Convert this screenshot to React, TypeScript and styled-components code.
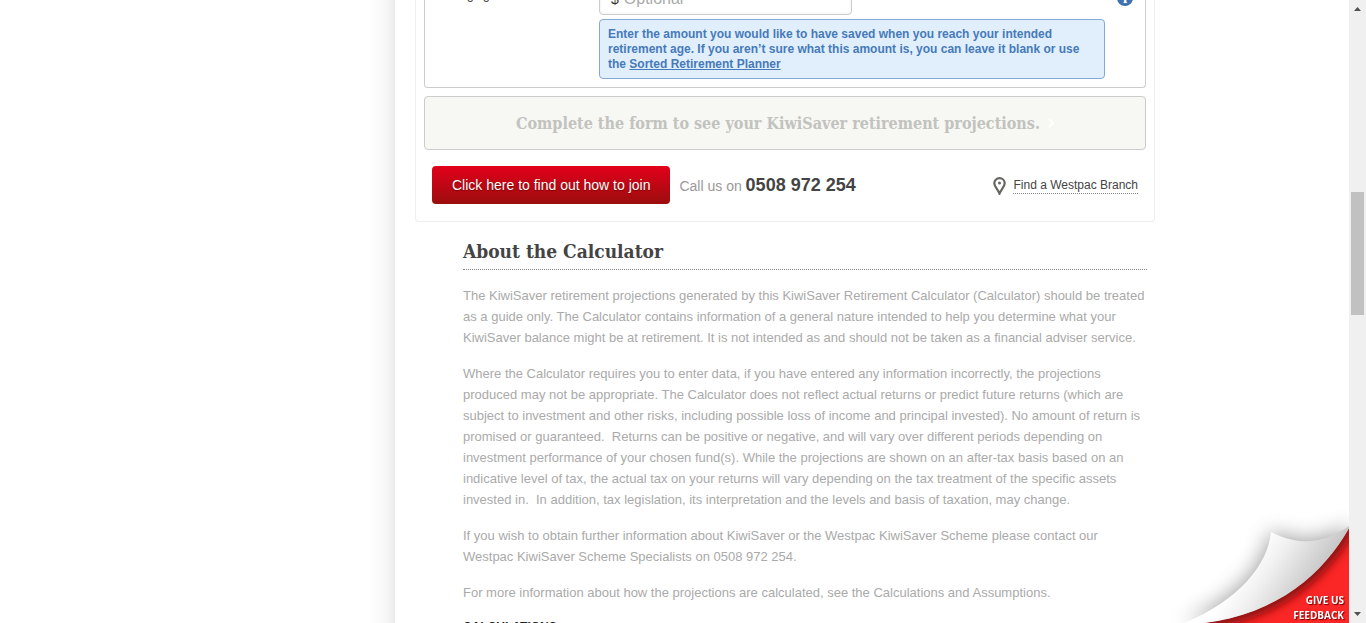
import React from 'react';
import styled, { createGlobalStyle } from 'styled-components';

const sans = `"Liberation Sans", Arial, Helvetica, sans-serif`;
const slab = `"DejaVu Serif Condensed", "DejaVu Serif", serif`;

const GlobalStyle = createGlobalStyle`
  *, *::before, *::after { box-sizing: border-box; }
  body { margin: 0; background: #fff; font-family: ${sans}; }
`;

const Viewport = styled.div`
  display: grid;
  grid-template-columns: minmax(0, 395fr) minmax(0, 954fr) 17px;
  grid-template-rows: minmax(0, 1fr);
  height: 100vh;
  overflow: hidden;
`;

const Gutter = styled.div`
  background: linear-gradient(to left, #ebebeb, #f6f6f6 8px, #fbfbfb 16px, #fff 28px);
`;

const Page = styled.main`
  min-width: 0;
  margin-top: -32px;
  padding-left: 20px;
`;

const Card = styled.section`
  max-width: 740px;
  padding: 0 8px 17px;
  border: 1px solid #eee;
  border-top: 0;
  border-radius: 0 0 4px 4px;
`;

const FormPanel = styled.form`
  display: grid;
  grid-template-columns: 162px minmax(0, 506px) 1fr;
  padding: 11px 12px 8px;
  border: 1px solid #ccc;
  border-top: 0;
  border-radius: 0 0 4px 4px;
`;

const FieldLabel = styled.label`
  padding-top: 9px;
  font-size: 12px;
  line-height: 15px;
  color: #333;
`;

const MoneyBox = styled.div`
  display: flex;
  align-items: center;
  gap: 5px;
  width: 253px;
  height: 36px;
  padding: 3px 11px 0;
  border: 1px solid #ccc;
  border-radius: 4px;
  box-shadow: inset 0 0 3px #e8e8e8;
  font-size: 14px;
  color: #333;
`;

const MoneyInput = styled.input`
  flex: 1;
  min-width: 0;
  padding: 0;
  border: 0;
  outline: 0;
  background: transparent;
  font: 16px ${sans};
  color: #333;
  &::placeholder { color: #aaa; }
`;

const Hint = styled.p`
  margin: 4px 0 0;
  padding: 7px 8px 6px;
  border: 1px solid #85a9d6;
  border-radius: 4px;
  background: #e1effd;
  font-size: 12px;
  font-weight: bold;
  line-height: 15px;
  color: #467ab8;
`;

const HintLink = styled.a`
  color: inherit;
`;

const InfoButton = styled.button`
  justify-self: end;
  align-self: start;
  width: 16px;
  height: 16px;
  margin-top: 11px;
  padding: 0;
  border: 0;
  border-radius: 50%;
  background: #3f72b3;
  font: bold 15px/16px "Liberation Serif", serif;
  color: #fff;
`;

const ProjectionButton = styled.button`
  display: flex;
  align-items: center;
  justify-content: center;
  gap: 8px;
  width: 100%;
  height: 54px;
  margin-top: 8px;
  padding: 0;
  border: 1px solid #ccc;
  border-radius: 4px;
  background: #f7f7f3;
  font: bold 16px ${slab};
  color: #c2c2be;
`;

const Actions = styled.div`
  display: flex;
  align-items: center;
  margin-top: 16px;
  padding: 0 8px;
`;

const JoinButton = styled.button`
  height: 38px;
  padding: 0 20px;
  border: 0;
  border-radius: 4px;
  background: linear-gradient(#e3001b, #9b0d0d);
  font: 14px ${sans};
  color: #fff;
  text-shadow: 0 1px 1px #7a0000;
`;

const CallUs = styled.p`
  margin: 0 auto 0 9px;
  font-size: 14px;
  color: #999;
`;

const Phone = styled.strong`
  font-size: 18px;
  color: #444;
`;

const BranchLink = styled.a`
  display: flex;
  align-items: center;
  gap: 7px;
  padding-top: 2px;
  font-size: 12px;
  line-height: 15px;
  color: #444;
  text-decoration: none;
`;

const BranchText = styled.span`
  border-bottom: 1px dotted #888;
`;

const About = styled.article`
  max-width: 732px;
  padding: 17px 0 0 48px;
`;

const AboutTitle = styled.h2`
  margin: 0;
  padding-bottom: 6px;
  border-bottom: 1px dotted #888;
  font: bold 19px/24px ${slab};
  color: #444;
`;

const Copy = styled.p`
  margin: 15px 0 0;
  font-size: 13px;
  line-height: 21px;
  color: #aaa;
`;

const SubTitle = styled.h3`
  margin: 15px 0 0;
  font-size: 12px;
  line-height: 18px;
  color: #222;
`;

const ScrollTrack = styled.div`
  display: grid;
  grid-template-rows: 17px 175fr 123fr 291fr 17px;
  background: #f0f0f0;
`;

const ScrollThumb = styled.div`
  grid-row: 3;
  margin: 0 2px;
  background: #c1c1c1;
`;

const ScrollArrow = styled.svg<{ $row: number }>`
  grid-row: ${(p) => p.$row};
  width: 17px;
  height: 17px;
  fill: #505050;
`;

const Feedback = styled.a`
  position: fixed;
  right: 17px;
  bottom: 0;
  display: block;
  width: 183px;
  height: 120px;
  text-decoration: none;
`;

const Curl = styled.svg`
  display: block;
`;

const FeedbackText = styled.span`
  position: absolute;
  right: 5px;
  bottom: 0;
  font: bold 10px/15px "Open Sans", sans-serif;
  text-align: right;
  color: #fff;
  text-shadow: 1px 1px 1px #700;
`;

export default function App() {
  return (
    <Viewport>
      <GlobalStyle />
      <Gutter />
      <Page>
        <Card>
          <FormPanel onSubmit={(e) => e.preventDefault()}>
            <FieldLabel htmlFor="goal">Savings goal</FieldLabel>
            <div>
              <MoneyBox>
                <span>$</span>
                <MoneyInput id="goal" placeholder="Optional" />
              </MoneyBox>
              <Hint>
                Enter the amount you would like to have saved when you reach your intended
                retirement age. If you aren’t sure what this amount is, you can leave it blank or
                use the <HintLink href="#planner">Sorted Retirement Planner</HintLink>
              </Hint>
            </div>
            <InfoButton type="button">i</InfoButton>
          </FormPanel>
          <ProjectionButton type="button">
            Complete the form to see your KiwiSaver retirement projections.
            <svg width="6" height="10" viewBox="0 0 6 10" fill="none" stroke="#fff" strokeWidth="2">
              <path d="M1 1l4 4-4 4" />
            </svg>
          </ProjectionButton>
          <Actions>
            <JoinButton type="button">Click here to find out how to join</JoinButton>
            <CallUs>
              Call us on <Phone>0508 972 254</Phone>
            </CallUs>
            <BranchLink href="#branch">
              <svg width="13" height="18" viewBox="0 0 13 18" fill="none">
                <path
                  d="M6.5 1.2C3.5 1.2 1.3 3.4 1.3 6.3c0 3.4 3.4 5.7 5.2 10.3 1.8-4.6 5.2-6.9 5.2-10.3 0-2.9-2.2-5.1-5.2-5.1z"
                  stroke="#666661"
                  strokeWidth="2.2"
                />
                <circle cx="6.5" cy="6" r="1.5" fill="#666661" />
              </svg>
              <BranchText>Find a Westpac Branch</BranchText>
            </BranchLink>
          </Actions>
        </Card>

        <About>
          <AboutTitle>About the Calculator</AboutTitle>
          <Copy>
            The KiwiSaver retirement projections generated by this KiwiSaver Retirement Calculator
            (Calculator) should be treated as a guide only. The Calculator contains information of a
            general nature intended to help you determine what your KiwiSaver balance might be at
            retirement. It is not intended as and should not be taken as a financial adviser
            service.
          </Copy>
          <Copy>
            Where the Calculator requires you to enter data, if you have entered any information
            incorrectly, the projections produced may not be appropriate. The Calculator does not
            reflect actual returns or predict future returns (which are subject to investment and
            other risks, including possible loss of income and principal invested). No amount of
            return is promised or guaranteed.&nbsp; Returns can be positive or negative, and will
            vary over different periods depending on investment performance of your chosen fund(s).
            While the projections are shown on an after-tax basis based on an indicative level of
            tax, the actual tax on your returns will vary depending on the tax treatment of the
            specific assets invested in.&nbsp; In addition, tax legislation, its interpretation and
            the levels and basis of taxation, may change.
          </Copy>
          <Copy>
            If you wish to obtain further information about KiwiSaver or the Westpac KiwiSaver
            Scheme please contact our Westpac KiwiSaver Scheme Specialists on 0508 972 254.
          </Copy>
          <Copy>
            For more information about how the projections are calculated, see the Calculations and
            Assumptions.
          </Copy>
          <SubTitle>CALCULATIONS</SubTitle>
        </About>
      </Page>

      <ScrollTrack>
        <ScrollArrow $row={1} viewBox="0 0 17 17">
          <path d="M5 11h7L8.500 7z" />
        </ScrollArrow>
        <ScrollThumb />
        <ScrollArrow $row={5} viewBox="0 0 17 17">
          <path d="M5 6h7l-3.500 4z" />
        </ScrollArrow>
      </ScrollTrack>

      <Feedback href="#feedback">
        <Curl width="183" height="120" viewBox="0 0 183 120">
          <defs>
            <linearGradient id="paper" gradientUnits="userSpaceOnUse" x1="88" y1="50" x2="142" y2="86">
              <stop offset="0" stopColor="#fff" />
              <stop offset="0.35" stopColor="#f0f0f0" />
              <stop offset="1" stopColor="#c8c8c8" />
            </linearGradient>
            <filter id="soft" x="-50%" y="-50%" width="200%" height="200%">
              <feGaussianBlur stdDeviation="11" />
            </filter>
            <filter id="edge" x="-20%" y="-20%" width="140%" height="140%">
              <feGaussianBlur stdDeviation="5" />
            </filter>
            <clipPath id="corner">
              <path d="M183 25C158 70 112 111 38 120H183z" />
            </clipPath>
          </defs>
          <path
            d="M105 29C102 62 72 98 18 120H183V23C158 40 135 44 105 29z"
            fill="#000"
            opacity="0.42"
            filter="url(#soft)"
          />
          <path d="M183 25C158 70 112 111 38 120H183z" fill="#fb2626" />
          <g clipPath="url(#corner)">
            <path
              d="M183 25C158 70 112 111 38 120"
              fill="none"
              stroke="#7d1010"
              strokeWidth="11"
              filter="url(#edge)"
            />
          </g>
          <path
            d="M105 29C102 62 72 98 18 120H38C112 111 158 70 183 25V23C158 40 135 44 105 29z"
            fill="url(#paper)"
          />
        </Curl>
        <FeedbackText>
          GIVE US
          <br />
          FEEDBACK
        </FeedbackText>
      </Feedback>
    </Viewport>
  );
}
